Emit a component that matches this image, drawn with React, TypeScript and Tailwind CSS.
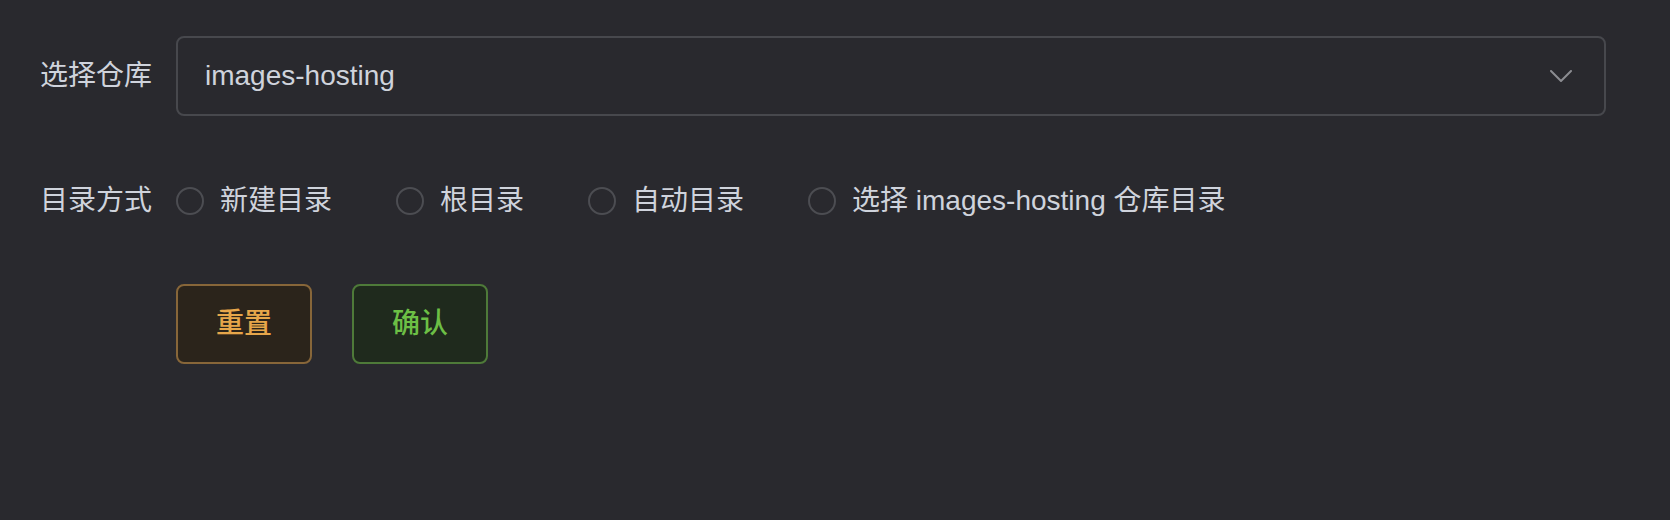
import React from "react";

const font = { fontFamily: '"Liberation Sans", "Noto Sans CJK SC", sans-serif' };

function Radio({ label }: { label: string }) {
  return (
    <label className="flex items-center mr-[64px] cursor-pointer">
      <span className="w-[28px] h-[28px] rounded-full border-2 border-[#4c4d52] bg-transparent box-border" />
      <span className="ml-[16px] text-[28px] leading-[28px] text-[#cfd3dc]">{label}</span>
    </label>
  );
}

export default function App() {
  return (
    <div
      className="w-[1670px] h-[520px] bg-[#29292e] pl-[40px] pt-[36px] box-border"
      style={font}
    >
      <div className="flex items-center h-[80px]">
        <div className="w-[136px] text-[28px] leading-[28px] text-[#cfd3dc]">选择仓库</div>
        <div className="w-[1430px] h-[80px] rounded-[8px] border-2 border-[#47484d] flex items-center justify-between pl-[27px] pr-[32px] box-border">
          <span className="text-[28px] leading-[28px] text-[#cfd3dc]">images-hosting</span>
          <svg width="22" height="12" viewBox="0 0 22 12" fill="none">
            <path d="M1 1 L11 11 L21 1" stroke="#8b8c91" strokeWidth="2" strokeLinejoin="round" strokeLinecap="round" />
          </svg>
        </div>
      </div>

      <div className="flex items-center h-[64px] mt-[53px]">
        <div className="w-[136px] text-[28px] leading-[28px] text-[#cfd3dc]">目录方式</div>
        <div className="flex items-center">
          <Radio label="新建目录" />
          <Radio label="根目录" />
          <Radio label="自动目录" />
          <Radio label="选择 images-hosting 仓库目录" />
        </div>
      </div>

      <div className="flex items-center h-[80px] mt-[51px] pl-[136px] gap-[40px]">
        <button className="w-[136px] h-[80px] rounded-[8px] border-2 border-[#876639] bg-[#2b241b] text-[#e6a64a] text-[28px] font-medium box-border">
          重置
        </button>
        <button className="w-[136px] h-[80px] rounded-[8px] border-2 border-[#4e7a39] bg-[#1f2a1d] text-[#6cbf45] text-[28px] font-medium box-border">
          确认
        </button>
      </div>
    </div>
  );
}
